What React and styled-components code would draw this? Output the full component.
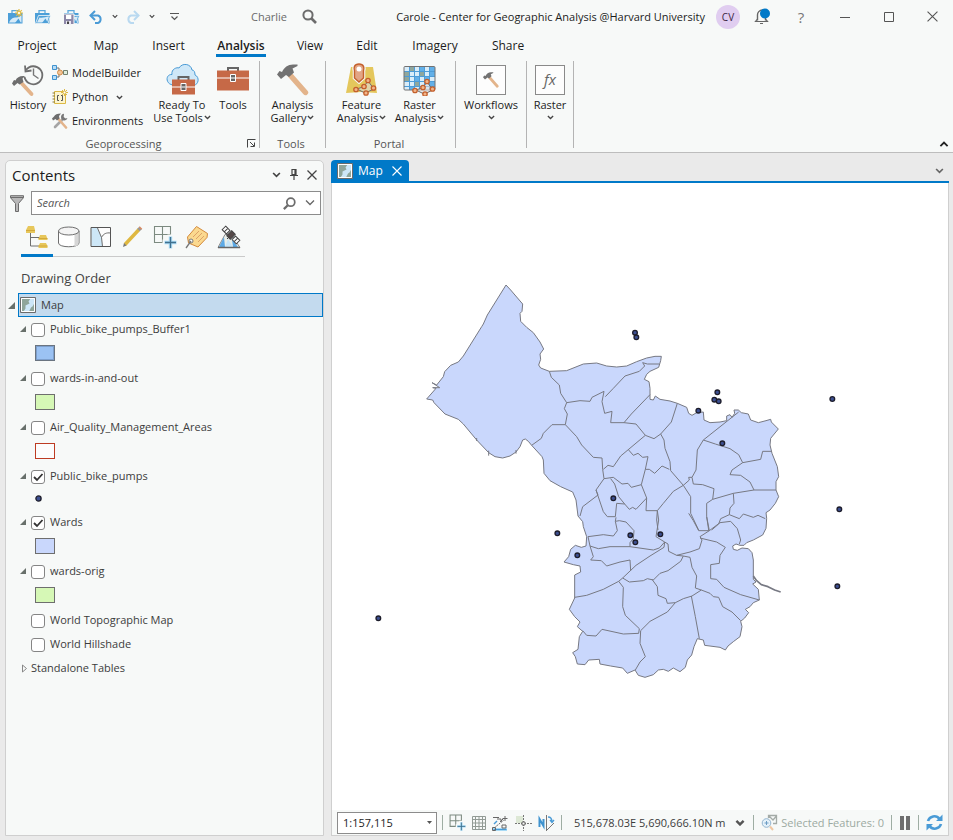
import React from "react";
import styled, { createGlobalStyle } from "styled-components";

const GlobalStyle = createGlobalStyle`
  * { box-sizing: border-box; }
  html, body, #root { height: 100%; }
  body {
    margin: 0;
    font-family: "Open Sans", "Noto Sans", sans-serif;
    font-size: 11px;
    line-height: 16px;
    color: #1c1c1c;
    background: #eaeaea;
  }
  button, input, select { font: inherit; color: inherit; }
  button { border: 0; padding: 0; background: none; }
  svg { display: block; flex: none; }
`;

const Window = styled.div`
  display: flex;
  flex-direction: column;
  min-height: 100vh;
`;

/* ---------- Title bar ---------- */

const Header = styled.header`
  background: #f7f9f8;
  border-bottom: 1px solid #bdbdbd;
`;
const TitleBar = styled.div`
  display: flex;
  align-items: center;
  height: 33px;
  white-space: nowrap;
`;
const QuickAccess = styled.div`
  display: flex;
  align-items: center;
  padding-left: 6px;
`;
const QuickButton = styled.button`
  display: grid;
  place-items: center;
  width: ${(p) => p.$w || 28}px;
  height: 24px;
`;
const CommandSearch = styled.button`
  display: flex;
  align-items: center;
  gap: 15px;
  margin-left: 59px;
  color: #6a6a6a;
`;
const TitleRight = styled.div`
  display: flex;
  align-items: center;
  margin-left: auto;
`;
const DocTitle = styled.span`
  margin-right: 11px;
`;
const Avatar = styled.button`
  width: 24px;
  height: 24px;
  border-radius: 50%;
  background: #e0cdf0;
  color: #3b1f3f;
  font-size: 10px;
  margin-right: 14px;
`;
const BellButton = styled.button`
  width: 24px;
  margin-right: 1px;
`;
const SystemButton = styled.button`
  display: grid;
  place-items: center;
  width: 44px;
  height: 32px;
  font-size: 15px;
  color: #777;
  &:last-child { width: 42px; }
`;

/* ---------- Ribbon ---------- */

const Tabs = styled.nav`
  display: flex;
  gap: 32px;
  height: 25px;
  padding-left: 15px;
  font-size: 12px;
`;
const Tab = styled.button`
  display: flex;
  justify-content: center;
  align-items: flex-end;
  width: ${(p) => p.$w}px;
  height: 24px;
  font-weight: ${(p) => (p.$active ? 600 : 400)};
  border-bottom: 3px solid ${(p) => (p.$active ? "#0079c8" : "transparent")};
  white-space: nowrap;
`;
const Ribbon = styled.div`
  display: flex;
  height: 94px;
  padding-top: 3px;
`;
const Group = styled.section`
  display: flex;
  flex-direction: column;
  flex: 0 0 ${(p) => p.$w}px;
  height: 87px;
  border-right: 1px solid #b4b4b4;
`;
const GroupBody = styled.div`
  display: flex;
  flex: 1;
  justify-content: ${(p) => (p.$start ? "flex-start" : "center")};
  padding-left: ${(p) => (p.$start ? 8 : 0)}px;
`;
const GroupFooter = styled.div`
  display: flex;
  align-items: center;
  height: 9px;
  padding-right: 3px;
  line-height: 9px;
  color: #555;
`;
const GroupName = styled.span`
  flex: 1;
  text-align: center;
`;
const LargeButton = styled.button`
  display: flex;
  flex-direction: column;
  align-items: center;
  width: ${(p) => p.$w}px;
  line-height: ${(p) => (p.$compact ? 12 : 13)}px;
  white-space: nowrap;
`;
const LargeIcon = styled.span`
  display: grid;
  place-items: center;
  height: 37px;
`;
const LabelLine = styled.span`
  display: flex;
  align-items: center;
  justify-content: center;
  gap: 1px;
  min-height: 13px;
`;
const SmallButtons = styled.div`
  display: flex;
  flex-direction: column;
  width: 104px;
`;
const SmallButton = styled.button`
  display: flex;
  align-items: center;
  gap: 4px;
  height: 24px;
  padding-left: 4px;
  white-space: nowrap;
`;
const SmallLabel = styled.span`
  margin-right: 4px;
`;
const Framed = styled.span`
  display: grid;
  place-items: center;
  width: 30px;
  height: 30px;
  border: 1px solid #8a8a8a;
  background: #fdfdfd;
  color: #666;
  font-size: 15px;
  font-style: italic;
`;
const CollapseRibbon = styled.button`
  margin: auto 4px 5px auto;
`;

/* ---------- Contents pane ---------- */

const Workspace = styled.main`
  display: flex;
  flex: 1;
  gap: 7px;
  padding: 7px 4px 4px 5px;
`;
const Pane = styled.aside`
  flex: 0 0 319px;
  background: #f7f9f8;
  border: 1px solid #cfcfcf;
  border-radius: 5px 5px 0 0;
`;
const PaneHeader = styled.div`
  display: flex;
  align-items: center;
  height: 30px;
  padding: 0 6px 2px;
`;
const PaneTitle = styled.h2`
  flex: 1;
  margin: 0;
  font-size: 15px;
  font-weight: 400;
`;
const PaneTools = styled.div`
  display: flex;
  gap: 9px;
  align-items: center;
`;
const SearchRow = styled.div`
  display: flex;
  align-items: center;
  gap: 7px;
  padding: 0 2px 0 4px;
`;
const SearchBox = styled.label`
  display: flex;
  align-items: center;
  flex: 1;
  height: 24px;
  padding: 0 2px 0 5px;
  background: #fff;
  border: 1px solid #8c8c8c;
`;
const SearchInput = styled.input`
  flex: 1;
  min-width: 0;
  border: 0;
  padding: 0;
  outline: 0;
  background: none;
  &::placeholder { color: #555; font-style: italic; opacity: 1; }
`;
const ViewTabs = styled.div`
  display: flex;
  width: 224px;
  margin: 4px 0 0 15px;
  border-bottom: 1px solid #cacaca;
`;
const ViewTab = styled.button`
  display: grid;
  place-items: center;
  width: 32px;
  height: 38px;
  margin-bottom: -1px;
  border-bottom: 3px solid ${(p) => (p.$active ? "#0079c8" : "transparent")};
`;
const SectionTitle = styled.h3`
  margin: 12px 0 6px 15px;
  font-size: 13px;
  font-weight: 400;
  line-height: 18px;
  color: #444;
`;
const MapRow = styled.div`
  display: flex;
  align-items: center;
  padding-left: 2px;
`;
const MapItem = styled.button`
  display: flex;
  align-items: center;
  flex: 1;
  gap: 5px;
  height: 24px;
  margin-left: 3px;
  padding-left: 1px;
  background: #c3daee;
  border: 1px solid #0079c8;
  color: #3c3c3c;
`;
const Tree = styled.ul`
  list-style: none;
  margin: 0;
  padding: 0 0 0 14px;
  color: #3c3c3c;
`;
const LayerRow = styled.div`
  display: flex;
  align-items: center;
  height: 24px;
`;
const Expander = styled.button`
  width: 11px;
`;
const LayerLabel = styled.label`
  display: flex;
  align-items: center;
  gap: 5px;
`;
const Tick = styled.span`
  display: grid;
  margin-top: 2px;
  svg { grid-area: 1 / 1; visibility: hidden; pointer-events: none; }
  input:checked + svg { visibility: visible; }
`;
const TickInput = styled.input`
  grid-area: 1 / 1;
  appearance: none;
  width: 14px;
  height: 14px;
  margin: 0;
  background: #fff;
  border: 1px solid #858585;
  border-radius: 3px;
`;
const SwatchRow = styled.div`
  display: flex;
  align-items: center;
  height: ${(p) => (p.$point ? 22 : 25)}px;
  padding: 0 0 2px 15px;
`;
const Swatch = styled.span`
  width: 20px;
  height: 16px;
  background: ${(p) => p.$fill};
  border: 1px solid ${(p) => p.$line};
  box-shadow: inset 0 0 0 1px ${(p) => p.$inner || "transparent"};
`;

/* ---------- Map view ---------- */

const MapView = styled.section`
  display: flex;
  flex: 1;
  flex-direction: column;
  min-width: 0;
`;
const ViewStrip = styled.div`
  display: flex;
  align-items: center;
  justify-content: space-between;
  height: 23px;
  padding-right: 5px;
  border-bottom: 2px solid #0079c8;
`;
const ViewTitle = styled.div`
  display: flex;
  align-items: center;
  gap: 5px;
  height: 22px;
  padding: 0 7px 0 6px;
  background: #0079c8;
  border-radius: 4px 4px 0 0;
  color: #fff;
  font-size: 12px;
`;
const ViewName = styled.span`
  margin-right: 4px;
`;
const Frame = styled.div`
  display: flex;
  flex: 1;
  flex-direction: column;
  background: #fff;
  border: 1px solid #cfcfcf;
  border-top: 0;
`;
const Canvas = styled.svg`
  flex: 1 1 0;
  width: 100%;
  min-height: 0;
`;
const StatusBar = styled.footer`
  display: flex;
  align-items: center;
  height: 25px;
  padding-left: 5px;
  background: #f7f9f8;
  color: #3c3c3c;
  white-space: nowrap;
`;
const ScaleBox = styled.label`
  display: grid;
  align-items: center;
  flex: 0 0 100px;
  height: 22px;
  margin-right: 5px;
  border: 1px solid #8c8c8c;
  background: #fff;
  svg { grid-area: 1 / 1; justify-self: end; margin-right: 4px; pointer-events: none; }
`;
const ScaleSelect = styled.select`
  grid-area: 1 / 1;
  appearance: none;
  width: 100%;
  border: 0;
  padding: 0 5px;
  background: none;
  color: #1c1c1c;
`;
const Rule = styled.span`
  flex: none;
  width: 1px;
  height: 15px;
  background: #9eada3;
`;
const StatusIcons = styled.div`
  display: flex;
  align-items: center;
  gap: 6px;
  padding: 0 6px;
`;
const StatusText = styled.button`
  display: flex;
  align-items: center;
  gap: 9px;
  padding-left: 12px;
`;
const StatusRight = styled.div`
  display: flex;
  align-items: center;
  gap: 7px;
  margin-left: auto;
  padding-right: 5px;
`;
const Selected = styled.span`
  display: flex;
  align-items: center;
  gap: 3px;
  color: #9caaa2;
`;

/* ---------- Icons ---------- */

const Icon = ({ w = 16, h, box, children, ...rest }) => (
  <svg width={w} height={h || w} viewBox={box || `0 0 ${w} ${h || w}`} fill="none" aria-hidden="true" {...rest}>
    {children}
  </svg>
);
const Caret = ({ w = 7, color = "#444", up, bold = 1.5 }) => (
  <Icon w={w} h={w > 8 ? 6 : 5} box="0 0 8 5">
    <path d={up ? "M1 4.3 4 1.3l3 3" : "M1 .7l3 3 3-3"} stroke={color} strokeWidth={bold} />
  </Icon>
);
const Hammer = ({ w = 32 }) => (
  <Icon w={w} box="0 0 32 32">
    <path d="M13.500 11.500 28.500 28.500" stroke="#e3b48b" strokeWidth="5.400" strokeLinecap="round" />
    <path d="M0 10.500 2.500 7l2.500 1C7 3.500 11 .5 16 .5h4.500v1.500L15.500 4.500l1.500 4-5 4.500-3-2-5 4z" fill="#727272" />
  </Icon>
);
const Briefcase = ({ star, save }) => (
  <Icon w={17} h={16}>
    <path d="M5 4V1.700h6V4" stroke="#5ba8dc" strokeWidth="1.300" />
    <path d="M1 4h14.500v10.500H1z" fill="#4c9fd8" />
    {!star && <path d="m1.500 14.500 3-8h12l-2.500 8z" fill="#4c9fd8" stroke="#f7f9f8" strokeWidth=".8" />}
    <path d={star ? "M2 13.500c2-4 4-5 7-5 3 0 4-1 5.500-2.500v7.500z" : "m3 13.500 2.500-5c3 1 6-1 9.500-1l-2 6z"} fill="#d7ebf8" />
    <path d="m8 14 3.500-4.500L14 14z" fill="#4c9fd8" />
    {star && (
      <g>
        <path d="M12 0v8M8 4h8M9.200 1.200l5.600 5.600M14.800 1.200 9.200 6.800" stroke="#e0bb45" strokeWidth="1.200" />
        <circle cx="12" cy="4" r="1.800" fill="#fff7d5" stroke="#e0bb45" />
      </g>
    )}
    {save && (
      <g>
        <path d="M.5 5h10.500v10.500H.5z" fill="#8d88a8" stroke="#f7f9f8" />
        <path d="M3 6h5.300v4H3z" fill="#fff" />
        <path d="M3 12h5v3.500H3z" fill="#e9e7f1" />
        <path d="M4 12.500h2v2.500H4z" fill="#444" />
      </g>
    )}
  </Icon>
);
const Undo = ({ color, flip }) => (
  <Icon w={15} h={14}>
    <g transform={flip ? "matrix(-1 0 0 1 15 0)" : undefined} stroke={color} strokeWidth="2">
      <path d="M1.500 5.500H9a4 4 0 0 1 0 7.500H6" />
      <path d="M6 1 1.500 5.500 6 10" />
    </g>
  </Icon>
);
const Glass = ({ w = 15, flip, thick = 2 }) => (
  <Icon w={w} box="0 0 15 15">
    <g transform={flip ? "matrix(-1 0 0 1 15 0)" : undefined} stroke="#6c6c6c">
      <circle cx="6" cy="6" r="4.600" strokeWidth={thick} />
      <path d="m9.500 9.500 4.500 4.500" strokeWidth="2.600" />
    </g>
  </Icon>
);
const Bell = () => (
  <Icon w={20} h={18}>
    <path d="M3.500 12.500V7.500a5 5 0 0 1 5-5.500h.5M11.500 9v3.500" stroke="#666" strokeWidth="1.400" />
    <path d="m3.500 11-2 2.500h12l-2-2.500M6 15.500h3" stroke="#666" strokeWidth="1.200" />
    <circle cx="11" cy="5.500" r="5" fill="#0079c8" />
  </Icon>
);
const HistoryIcon = () => (
  <Icon w={34} h={34}>
    <path d="M15 7a9 9 0 1 1-1.500 7" stroke="#6e6e6e" strokeWidth="1.800" />
    <path d="m14 2.500.5 6 6-1" stroke="#6e6e6e" strokeWidth="1.800" />
    <path d="M22.500 5.500V12l5 3.500" stroke="#777" strokeWidth="1.400" />
    <path d="M9.500 20 21 32" stroke="#f7f9f8" strokeWidth="7" />
    <path d="M9.500 19 20.500 31" stroke="#e3b48b" strokeWidth="3.800" strokeLinecap="round" />
    <path d="M1 20.500 3 17l1.500.5C6 14 9 12.500 14 13l-2.500 2.500 1 3.500-4 2.500-2-1.500L3 23z" fill="#6e6e6e" />
  </Icon>
);
const ModelIcon = () => (
  <Icon>
    <path d="M4 3h3v9H4M7 7.500h5" stroke="#6e6e6e" />
    <path d="M.5.5h4v4h-4zM.5 10.500h4v4h-4z" fill="#b9dcf5" stroke="#3f93cf" />
    <path d="M11.500 5.500h4v4h-4z" fill="#dfeede" stroke="#72806f" />
    <circle cx="8" cy="7.500" r="2.500" fill="#f2c496" stroke="#d28f4b" />
  </Icon>
);
const PythonIcon = () => (
  <Icon>
    <path d="M2.500 2.500h11v12h-11z" fill="#fdf5ce" stroke="#dcb945" />
    <path d="M.5 4H3M.5 7H3M.5 10H3M.5 13H3" stroke="#8a7a3a" />
    <path d="M7 6.500H5.500v5H7M9 6.500h1.500v5H9" stroke="#555" />
    <path d="M12.500 0v7M9 3.500h7M10 1l5 5M15 1l-5 5" stroke="#dcb945" />
    <circle cx="12.500" cy="3.500" r="1.500" fill="#fff" stroke="#dcb945" />
  </Icon>
);
const EnvIcon = () => (
  <Icon>
    <path d="m3 14 8-8" stroke="#a5a5a5" strokeWidth="2.600" strokeLinecap="round" />
    <path d="M12 .8a3.300 3.300 0 1 0 3.500 4.200l-2 .5L11.700 4z" fill="#777" />
    <path d="m6.500 6 7.500 8.500" stroke="#e3b48b" strokeWidth="2.600" strokeLinecap="round" />
    <path d="M0 5.500 2 3.500C3 1.500 5 .5 9 .5L7 3l.5 2.500-2.500 2-1.500-1.500L1 7.500z" fill="#6e6e6e" />
  </Icon>
);
const Toolbox = ({ x = 0, y = 0, w = 32, h = 22 }) => (
  <g transform={`translate(${x} ${y})`}>
    <path d={`M${w / 2 - 5} 3V0h10v3`} stroke="#666" strokeWidth="2" />
    <path d={`M0 2.500h${w}v${h - 2}H0z`} fill="#c66947" />
    <path d={`M0 10h${w}`} stroke="#fff" />
    <path d={`M${w / 2 - 2.5} 6.500h5v7h-5z`} fill="#666" stroke="#fff" />
    <path d={`M${w / 2 - 2} 10h4`} stroke="#fff" />
  </g>
);
const CloudTools = () => (
  <Icon w={33} h={33}>
    <path d="M7 22C-1 21-.5 11 6 11.500 5 6 11 4 13 5c3-5.500 12-4.500 13 2 2 0 3 2 3 5 5 2 3.500 10-1 10z" fill="#cfe8f8" stroke="#4a9bd6" />
    <Toolbox x={6} y={14} w={23} h={17} />
  </Icon>
);
const Nodes = () => (
  <g>
    <path d="m22 18 6 8-9 4-8-4 7-2.500z" stroke="#6e6e6e" fill="#ddd" fillOpacity=".6" />
    {[[22, 17.5], [27.5, 25], [20, 30], [10, 26.5], [18, 23.5]].map(([x, y]) => (
      <circle key={`${x}-${y}`} cx={x} cy={y} r="2.200" fill="#f0b58a" stroke="#c4602c" strokeWidth="1.300" />
    ))}
  </g>
);
const FeatureIcon = () => (
  <Icon w={32} h={33}>
    <path d="M5 4h22l4 26-16-1-15 1z" fill="#e4c75c" />
    <path d="M13 1c5 0 5.500 4 4.500 7v7l-4.500 4-4.500-4V8C7.500 5 8 1 13 1z" stroke="#f7f9f8" strokeWidth="3.500" />
    <path d="M13 1c5 0 5.500 4 4.500 7v7l-4.500 4-4.500-4V8C7.500 5 8 1 13 1z" fill="#e2a585" stroke="#c4602c" strokeWidth="1.400" />
    <circle cx="13" cy="6" r="2.500" fill="#fff" />
    <Nodes />
  </Icon>
);
const RasterIcon = () => (
  <Icon w={33} h={33}>
    <path d="M1 4h31v23H1z" fill="#d9edf9" />
    <path d="M1 9h5v5H1zM7 4h5v5H7zM17 9h5v5h-5zM1 14h5v5H1zM12 19h5v5h-5z" fill="#8fa79d" />
    <path d="M17 4h5v5h-5zM27 4h5v10h-5zM22 14h5v5h-5zM6 24h5v3H6zM27 19h5v5h-5zM12 14h5v5h-5z" fill="#62b0e8" />
    <path d="M6.500 4v23M11.500 4v23M16.500 4v23M21.500 4v23M26.500 4v23M1 8.500h31M1 13.500h31M1 18.500h31M1 23.500h31" stroke="#4d9cd7" />
    <rect x="1" y="3.500" width="31" height="23.500" rx="1" stroke="#737373" />
    <g transform="translate(2 1)"><Nodes /></g>
  </Icon>
);
const MapThumb = () => (
  <Icon w={16}>
    <path d="M.5.5h15v15H.5z" fill="#cde6f7" stroke="#6b6b6b" />
    <path d="M1.500 1.500h9l-2 3 1 2-4 2v3l-2 3h-2zM14.500 6v8.500H9l2-4 1.500-1z" fill="#8fa59a" />
    <path d="M1.500 1.500h13v13h-13z" stroke="#fff" />
  </Icon>
);
const Close = ({ w = 10, color = "#444", sw = 1.3 }) => (
  <Icon w={w} box="0 0 10 10"><path d="m.5.5 9 9M9.500.5l-9 9" stroke={color} strokeWidth={sw} /></Icon>
);
const Pin = () => (
  <Icon w={8} h={12}><path d="M2 .5h4v5H2zM5 .5v5M0 6.500h8M4 6.500V11" stroke="#444" strokeWidth="1.200" /></Icon>
);
const Funnel = () => (
  <Icon w={14} h={17}>
    <path d="M.5.7h13v2L8.500 8.500v8h-3v-8l-5-5.800z" fill="#b9b9b9" stroke="#6c6c6c" />
    <path d="M.5 2.500h13" stroke="#6c6c6c" />
  </Icon>
);

const ListByOrder = () => (
  <Icon w={24}>
    <path d="M5.500 8v13H16M5.500 12.500H16" stroke="#6e6e6e" />
    <path d="M3 1h6l1 4v3H1V5zM15 10h6l1.500 4v1h-9v-1zM15 18h6l1.500 3v2h-9v-2z" fill="#e7c75b" />
    <path d="M1 5.500h9M13.500 13.500h9M13.500 21h9" stroke="#d3a93a" />
  </Icon>
);
const Cylinder = () => (
  <Icon w={24}>
    <path d="M1.500 6v12c0 5 20.500 5 20.500 0V6" fill="#fff" stroke="#6e6e6e" />
    <path d="M17.500 10v11.500c3-.5 4-2 4-3.500V7z" fill="#d6d6d6" />
    <ellipse cx="11.750" cy="6" rx="10.250" ry="4" fill="#f4f4f4" stroke="#6e6e6e" />
  </Icon>
);
const Selection = () => (
  <Icon w={24}>
    <path d="M2 2.500h19.500v19H2z" fill="#fdfdfd" />
    <path d="M2.500 3h6l4 9.500 1 9h-11z" fill="#cde7f7" />
    <path d="m8.500 3 4 9.500 1 9M12.500 12.500c2-4 5-5 9-4.500" stroke="#6e6e6e" />
    <path d="M2 2.500h19.500v19H2z" stroke="#555" />
  </Icon>
);
const Pencil = () => (
  <Icon w={24}>
    <path d="M4 19.500 18 4.500" stroke="#dfb840" strokeWidth="3.500" />
    <path d="m2 22 1-4 2.500 2.500z" fill="#777" />
    <path d="m17.500 5 2-2" stroke="#999" strokeWidth="3.500" />
    <path d="m19 3.500 1-1" stroke="#d88a62" strokeWidth="3.500" />
  </Icon>
);
const GridPlus = ({ w = 24 }) => (
  <Icon w={w} box="0 0 24 24">
    <path d="M1.500 1.500h16v16h-16zM9.500 1.500v16M1.500 9.500h16" stroke="#7c8a80" strokeWidth={w < 20 ? 1.5 : 1.1} />
    <path d="M17.500 9.500v14M9.500 17.500h14" stroke="#f7f9f8" strokeWidth="6" />
    <path d="M17.500 11.500v12M11.500 17.500h12" stroke="#a8daf5" strokeWidth="3.400" />
    <path d="M17.500 12v11M12 17.500h11" stroke="#41718f" strokeWidth="1.300" />
  </Icon>
);
const Tag = () => (
  <Icon w={24}>
    <path d="m2.500 12 9-10.500 11 7-.5 4-9 9.500-9.500-4z" fill="#fbd98f" stroke="#d38a3c" />
    <path d="m8 12 6-6M11 14l6-6M13 17l6-6" stroke="#d6935d" strokeWidth=".8" />
    <circle cx="6" cy="16" r="2" fill="#fff" stroke="#777" />
    <path d="m1 23 5-7" stroke="#777" strokeWidth="1.300" />
  </Icon>
);
const Satellite = () => (
  <Icon w={24}>
    <path d="M8 9.500h6l9 13H1z" fill="#e8eee9" stroke="#8a8a8a" />
    <path d="m7 12-5 10h6zM15 14l6 8h-5z" fill="#5ba9e6" />
    <path d="m8 22 3-8 5 8z" fill="#c6e5f8" />
    <path d="M1 22.500h22" stroke="#666" strokeWidth="1.500" />
    <g transform="rotate(45 14 10)" stroke="#444">
      <path d="M4 7.500h6v5H4zM18 7.500h6v5h-6zM7 7.500v5M21 7.500v5" fill="#fff" />
      <path d="M11.500 6.500h5v7h-5z" fill="#554848" />
    </g>
    <path d="m13 11-3 3" stroke="#444" />
  </Icon>
);
const Grid = () => (
  <Icon w={14}>
    <path d="M.5.5h13v13H.5zM3.500.5v13M7 .5v13M10.500.5v13M.5 3.500h13M.5 7h13M.5 10.500h13" stroke="#929b95" />
  </Icon>
);
const Snap = () => (
  <Icon w={17} h={16}>
    <path d="M1 14.500h14" stroke="#a8daf5" strokeWidth="3" />
    <path d="M1.500 14.500h13" stroke="#4a9bd6" />
    <path d="m2 13 10-8" stroke="#666" strokeDasharray="2 1" />
    <path d="M1 2.500h6M13 1v5M10.500 3.500h5M10 10h4v3h-4zM.5 12.500h3v3h-3zM8 7l3-3M5 4h4v3" stroke="#666" />
    <path d="m2 9 3-3" stroke="#4a9bd6" strokeWidth="1.500" />
  </Icon>
);
const Cross = () => (
  <Icon w={17} h={16}>
    <path d="M1 1h7v7H1z" fill="#dde8d5" />
    <path d="M8.500 0v16M0 8.500h17" stroke="#777" strokeDasharray="2 1" />
    <path d="M7 7h3v3H7z" fill="#f7f9f8" stroke="#666" />
  </Icon>
);
const North = () => (
  <Icon w={17} h={16}>
    <path d="M1.500 12V4l4 7V4" stroke="#3f93cf" strokeWidth="2" />
    <path d="M8.500 0v16" stroke="#777" />
    <path d="m9 15 7-7" stroke="#777" />
    <path d="M10 2c3 0 4 2 4 5M12 5l2 2.500L16 5" stroke="#4a9bd6" strokeWidth="1.300" />
  </Icon>
);
const ZoomSelected = () => (
  <Icon w={17} h={17}>
    <path d="M7.500 4V1.500h8v8H12M7.500 1.500 12 6l3.500-4" stroke="#a4aba7" strokeWidth="1.300" />
    <circle cx="5.500" cy="9" r="4.300" fill="#e4f1fa" stroke="#93b4cf" />
    <path d="M5.500 7v4M3.500 9h4" stroke="#6c9cc4" />
    <path d="m9 12.500 3 3.500" stroke="#efc7a3" strokeWidth="2" />
  </Icon>
);
const Refresh = () => (
  <Icon w={17} h={17}>
    <path d="M2 7a6.500 6.500 0 0 1 11.500-2M15 10A6.500 6.500 0 0 1 3.500 12" stroke="#4a9bd6" strokeWidth="2.600" />
    <path d="M16.500.5v6.500H10zM.5 16.500V10H7z" fill="#4a9bd6" />
  </Icon>
);

/* ---------- Data ---------- */

const TABS = [
  ["Project", 44], ["Map", 30], ["Insert", 31], ["Analysis", 50],
  ["View", 24], ["Edit", 26], ["Imagery", 46], ["Share", 36],
];

const LAYERS = [
  { name: "Public_bike_pumps_Buffer1", fill: "#9bc2f3", line: "#6a7480", inner: "#7d9fcc" },
  { name: "wards-in-and-out", fill: "#d6f8b6", line: "#6e6e6e" },
  { name: "Air_Quality_Management_Areas", fill: "#fcfcfc", line: "#bd3b22" },
  { name: "Public_bike_pumps", on: true, point: true },
  { name: "Wards", on: true, fill: "#c9d7fc", line: "#6e6e6e" },
  { name: "wards-orig", fill: "#d6f8b6", line: "#6e6e6e" },
  { name: "World Topographic Map" },
  { name: "World Hillshade" },
];

const PUMPS = [
  [315, 8], [319, 22], [562, 187], [553, 209], [566, 214], [505, 242], [907, 207],
  [577, 340], [250, 505], [928, 538], [82, 610], [142, 676], [301, 616], [316, 637],
  [391, 613], [922, 769], [-455, 865],
];

const CITY =
  "M-72-135-58-120-22-78-24-56-30-50-28-26-10-8 10 8 30 36 41 57 30 72 32 88 26 105 32 114 58 124 110 122 135 112 160 102 200 99 230 108 260 111 290 108 320 95 350 84 375 79 394 79 392 92 386 112 360 124 350 133 343 148 357 155 360 175 360 208 370 210 376 198 390 208 420 213 442 220 470 232 476 250 486 256 500 248 520 246 522 270 540 278 570 276 590 272 590 258 600 254 606 262 614 250 612 240 625 240 634 248 655 252 662 270 685 278 708 272 722 268 724 276 745 297 722 325 720 345 726 370 742 410 746 440 738 455 738 480 746 500 736 520 720 540 708 548 710 565 708 595 698 615 670 630 650 638 642 646 630 646 618 642 608 648 610 658 622 661 636 654 655 656 666 668 670 690 670 740 670 748 678 756 668 762 685 778 688 810 670 818 660 830 646 838 656 848 644 864 632 874 636 890 630 920 610 935 594 948 586 960 570 952 524 946 520 930 502 926 492 950 485 975 472 990 466 1012 450 1025 430 1014 415 1024 400 1018 385 1020 370 1034 345 1042 325 1036 315 1020 292 1030 278 1014 242 1008 210 1002 208 988 176 990 165 1004 142 1002 136 980 128 968 144 958 148 920 158 904 142 890 150 876 134 860 118 838 134 804 134 735 152 726 150 708 130 704 102 696 116 680 122 658 136 646 154 652 168 648 170 620 160 590 158 575 144 558 138 510 128 486 92 470 60 452 42 430 40 390 36 380 5 346-5 334-14 327-22 330-30 350-42 366-60 378-82 384-105 380-124 368-160 330-200 282-215 268-255 252-288 218-292 210-310 207-282 175-292 173-271 173-294 158-280 165-260 140-256 125-238 106-215 96-200 78-145-10-140-18-128-45Z";

const NORTH_WARDS = [
  "M58 124 64 142 88 165 92 190 110 218 103 236 112 252 106 284 66 284 40 310 34 325 5 346",
  "M110 218 150 212 180 214 186 202 222 184 216 215 224 250 246 244 242 278 282 278 304 252 360 194",
  "M226 200 250 175 285 138 328 124 344 108 338 98 352 102 388 102",
  "M282 278 318 282 346 316 372 326 392 312 424 276 442 220",
  "M106 284 140 320 155 345 190 382 216 384 218 418 222 446 198 480 204 495 158 530 150 558",
  "M220 418 234 406 250 410 272 378 346 316",
  "M296 360 310 376 324 370 338 382 354 380 346 418 358 418 374 430 396 408 418 418",
  "M392 312 402 330 405 355 420 395 422 422 460 466 482 500 482 550 506 600",
  "M346 418 334 464 350 504 348 542 382 542 400 520 430 484 460 466 478 450 476 442 486 442 498 420 502 360 520 330 626 246",
  "M222 446 250 442 276 462 294 460 304 472 334 464",
  "M242 446 254 462 266 500 284 522 298 538 308 532 318 538 350 504",
  "M198 480 220 545 232 560 256 560 260 520 284 522",
  "M520 330 556 342 600 356 626 374 638 398 692 388 698 364 724 364",
  "M638 398 606 420 600 434 632 436 660 456 672 480",
  "M486 442 490 462 518 464 552 476 548 508 530 520 530 560 536 600",
  "M548 508 610 490 672 480 738 480",
  "M610 490 612 520 600 534 598 554 628 566 640 552 670 562 684 556 706 566",
  "M598 554 572 566 566 582 545 600",
  "M382 542 380 570 384 600",
];

const SOUTH_WARDS = [
  "M228 172 226 184 238 182 258 186 282 212 280 236 270 248 270 260",
  "M226 184 232 212 220 228 190 224 144 230 150 258 175 266 210 260 270 260 340 270 358 264 374 246",
  "M352 152 356 180 348 230 374 246 384 252 386 274 410 286 450 276 478 266 486 240 480 230 508 212 540 188 572 184 592 206 602 240 598 252",
  "M446 160 460 182 476 212 508 212 500 170",
  "M150 258 160 290 152 300 184 302 200 318 240 306 270 300 272 332",
  "M374 246 372 262 330 288 288 316 248 354 236 364 190 388 140 406 104 412",
  "M248 354 268 366 310 362 322 356 340 360 360 340 384 332 422 304 430 288 410 286",
  "M336 358 352 380 354 406 378 416 382 430 406 428 430 416 456 408 484 390",
  "M430 288 450 292 456 322 470 348 466 384 484 390 510 400 520 410 536 412 548 440 576 456 602 482",
  "M480 234 530 246 556 262 540 286 538 310 512 314 512 356 530 358 552 382 602 404 658 420",
  "M236 364 250 382 248 440 256 466 298 506 296 520 250 522 186 508 168 528 140 526 128 512",
  "M302 512 330 484 382 456 406 428",
  "M302 512 300 550 316 590 300 606 286 630",
  "M454 408 466 470 478 536",
];

/* ---------- Parts ---------- */

function RibbonLabel({ lines, caret }) {
  return lines.map((line, i) => (
    <LabelLine key={i}>
      {line}
      {caret && i === lines.length - 1 && <Caret />}
    </LabelLine>
  ));
}

function RibbonButton({ icon, lines, caret, w, compact }) {
  return (
    <LargeButton $w={w} $compact={compact}>
      <LargeIcon>{icon}</LargeIcon>
      <RibbonLabel lines={lines} caret={caret} />
    </LargeButton>
  );
}

function RibbonGroup({ w, name, launcher, start, children }) {
  return (
    <Group $w={w}>
      <GroupBody $start={start}>{children}</GroupBody>
      <GroupFooter>
        <GroupName>{name}</GroupName>
        {launcher && (
          <button aria-label="Geoprocessing options">
            <Icon w={9}><path d="M.5 8.500v-8h8M3 3l4 4M7.500 3.500v4h-4" stroke="#444" /></Icon>
          </button>
        )}
      </GroupFooter>
    </Group>
  );
}

function Layer({ layer }) {
  const hasSymbol = layer.fill || layer.point;
  return (
    <li>
      <LayerRow>
        <Expander aria-label={`Toggle ${layer.name}`}>
          {hasSymbol && <Icon w={6}><path d="M6 0v6H0z" fill="#68706b" /></Icon>}
        </Expander>
        <LayerLabel>
          <Tick>
            <TickInput type="checkbox" defaultChecked={layer.on} />
            <Icon w={14}><path d="m3 7 3 3 5.500-6" stroke="#333" strokeWidth="1.800" /></Icon>
          </Tick>
          {layer.name}
        </LayerLabel>
      </LayerRow>
      {hasSymbol && (
        <SwatchRow $point={layer.point}>
          {layer.point ? (
            <Icon w={7}><circle cx="3.500" cy="3.500" r="2.600" fill="#3c4f91" stroke="#1d1d2b" strokeWidth="1.300" /></Icon>
          ) : (
            <Swatch $fill={layer.fill} $line={layer.line} $inner={layer.inner} />
          )}
        </SwatchRow>
      )}
    </li>
  );
}

function WardMap() {
  return (
    <Canvas viewBox="-594 -441 1848 1881" role="img" aria-label="Wards and public bike pumps">
      <g stroke="#777983" strokeWidth="3" strokeLinejoin="round" fill="none">
        <path d={CITY} fill="#c9d7fc" />
        {NORTH_WARDS.map((d) => <path key={d} d={d} />)}
        <g transform="translate(30 390)">
          {SOUTH_WARDS.map((d) => <path key={d} d={d} />)}
          <path d="M640 348 650 362 664 374 684 380 704 390 722 396" strokeWidth="5" />
        </g>
        <path d="M-160 324v9M-124 362v15M-42 360v11" />
      </g>
      <g fill="#3c4f91" stroke="#1d1d2b" strokeWidth="4">
        {PUMPS.map(([x, y]) => <circle key={`${x},${y}`} cx={x} cy={y} r="7" />)}
      </g>
    </Canvas>
  );
}

export default function App() {
  return (
    <Window>
      <GlobalStyle />
      <Header>
        <TitleBar>
          <QuickAccess>
            <QuickButton $w={18} aria-label="New project"><Briefcase star /></QuickButton>
            <QuickButton $w={37} aria-label="Open project"><Briefcase /></QuickButton>
            <QuickButton $w={20} aria-label="Save project"><Briefcase save /></QuickButton>
            <QuickButton $w={30} aria-label="Undo"><Undo color="#4a9bd6" /></QuickButton>
            <QuickButton $w={7} aria-label="Undo list"><Caret w={6} /></QuickButton>
            <QuickButton $w={29} aria-label="Redo"><Undo color="#b9d9f0" flip /></QuickButton>
            <QuickButton $w={9} aria-label="Redo list"><Caret w={6} /></QuickButton>
            <QuickButton $w={36} aria-label="Customize">
              <Icon w={9} h={8}><path d="M0 .5h9M1.500 3.500l3 3 3-3" stroke="#555" strokeWidth="1.200" /></Icon>
            </QuickButton>
          </QuickAccess>
          <CommandSearch>Charlie<Glass /></CommandSearch>
          <TitleRight>
            <DocTitle>Carole - Center for Geographic Analysis @Harvard University</DocTitle>
            <Avatar>CV</Avatar>
            <BellButton aria-label="Notifications"><Bell /></BellButton>
            <SystemButton>?</SystemButton>
            <SystemButton aria-label="Minimize"><Icon w={10}><path d="M0 5.500h10" stroke="#555" /></Icon></SystemButton>
            <SystemButton aria-label="Maximize"><Icon w={10}><path d="M.5.5h9v9h-9z" stroke="#555" /></Icon></SystemButton>
            <SystemButton aria-label="Close"><Close color="#555" sw={1} w={11} /></SystemButton>
          </TitleRight>
        </TitleBar>
        <Tabs>
          {TABS.map(([name, w]) => (
            <Tab key={name} $w={w} $active={name === "Analysis"}>{name}</Tab>
          ))}
        </Tabs>
        <Ribbon>
          <RibbonGroup w={260} name="Geoprocessing" launcher start>
            <RibbonButton w={40} icon={<HistoryIcon />} lines={["History"]} />
            <SmallButtons>
              <SmallButton><ModelIcon />ModelBuilder</SmallButton>
              <SmallButton><PythonIcon /><SmallLabel>Python</SmallLabel><Caret /></SmallButton>
              <SmallButton><EnvIcon />Environments</SmallButton>
            </SmallButtons>
            <RibbonButton w={60} icon={<CloudTools />} lines={["Ready To", "Use Tools"]} caret />
            <RibbonButton w={42} icon={<Icon w={32} h={28}><Toolbox y={2} /></Icon>} lines={["Tools"]} />
          </RibbonGroup>
          <RibbonGroup w={66} name="Tools">
            <RibbonButton w={60} icon={<Hammer />} lines={["Analysis", "Gallery"]} caret compact />
          </RibbonGroup>
          <RibbonGroup w={130} name="Portal">
            <RibbonButton w={58} icon={<FeatureIcon />} lines={["Feature", "Analysis"]} caret />
            <RibbonButton w={58} icon={<RasterIcon />} lines={["Raster", "Analysis"]} caret />
          </RibbonGroup>
          <RibbonGroup w={71}>
            <RibbonButton w={64} icon={<Framed><Hammer w={16} /></Framed>} lines={["Workflows", ""]} caret />
          </RibbonGroup>
          <RibbonGroup w={47}>
            <RibbonButton w={42} icon={<Framed>fx</Framed>} lines={["Raster", ""]} caret />
          </RibbonGroup>
          <CollapseRibbon aria-label="Collapse ribbon"><Caret up w={10} color="#222" /></CollapseRibbon>
        </Ribbon>
      </Header>

      <Workspace>
        <Pane>
          <PaneHeader>
            <PaneTitle>Contents</PaneTitle>
            <PaneTools>
              <button aria-label="Pane menu"><Caret w={9} /></button>
              <button aria-label="Auto hide"><Pin /></button>
              <button aria-label="Close pane"><Close /></button>
            </PaneTools>
          </PaneHeader>
          <SearchRow>
            <button aria-label="Filter"><Funnel /></button>
            <SearchBox>
              <SearchInput placeholder="Search" aria-label="Search" />
              <Glass w={13} flip />
              <Icon w={22} h={6}><path d="m10 .5 4 4 4-4" stroke="#666" strokeWidth="1.300" /></Icon>
            </SearchBox>
          </SearchRow>
          <ViewTabs>
            <ViewTab $active aria-label="List by drawing order"><ListByOrder /></ViewTab>
            <ViewTab aria-label="List by data source"><Cylinder /></ViewTab>
            <ViewTab aria-label="List by selection"><Selection /></ViewTab>
            <ViewTab aria-label="List by editing"><Pencil /></ViewTab>
            <ViewTab aria-label="List by snapping"><GridPlus /></ViewTab>
            <ViewTab aria-label="List by labeling"><Tag /></ViewTab>
            <ViewTab aria-label="List by imagery"><Satellite /></ViewTab>
          </ViewTabs>
          <SectionTitle>Drawing Order</SectionTitle>
          <MapRow>
            <Icon w={7}><path d="M7 0v7H0z" fill="#68706b" /></Icon>
            <MapItem><MapThumb />Map</MapItem>
          </MapRow>
          <Tree>
            {LAYERS.map((layer) => <Layer key={layer.name} layer={layer} />)}
            <li>
              <LayerRow>
                <Expander aria-label="Toggle Standalone Tables">
                  <Icon w={7} h={9}><path d="M2.500 1v7l4-3.500z" stroke="#888" /></Icon>
                </Expander>
                Standalone Tables
              </LayerRow>
            </li>
          </Tree>
        </Pane>

        <MapView>
          <ViewStrip>
            <ViewTitle>
              <MapThumb />
              <ViewName>Map</ViewName>
              <button aria-label="Close view"><Close color="#fff" sw={1.1} /></button>
            </ViewTitle>
            <button aria-label="View list"><Caret w={9} color="#666" /></button>
          </ViewStrip>
          <Frame>
            <WardMap />
            <StatusBar>
              <ScaleBox>
                <ScaleSelect aria-label="Map scale"><option>1:157,115</option></ScaleSelect>
                <Icon w={5} h={3}><path d="M0 0h5L2.500 3z" fill="#555" /></Icon>
              </ScaleBox>
              <Rule />
              <StatusIcons>
                <GridPlus w={17} /><Grid /><Snap /><Cross /><North />
              </StatusIcons>
              <Rule />
              <StatusText>515,678.03E 5,690,666.10N m<Caret w={10} color="#555" bold={2} /></StatusText>
              <StatusRight>
                <Rule />
                <Selected><ZoomSelected />Selected Features: 0</Selected>
                <Rule />
                <button aria-label="Pause drawing">
                  <Icon w={12} h={14}><path d="M1 0h4v14H1zM7 0h4v14H7z" fill="#6e6e6e" /></Icon>
                </button>
                <Rule />
                <button aria-label="Refresh"><Refresh /></button>
              </StatusRight>
            </StatusBar>
          </Frame>
        </MapView>
      </Workspace>
    </Window>
  );
}
